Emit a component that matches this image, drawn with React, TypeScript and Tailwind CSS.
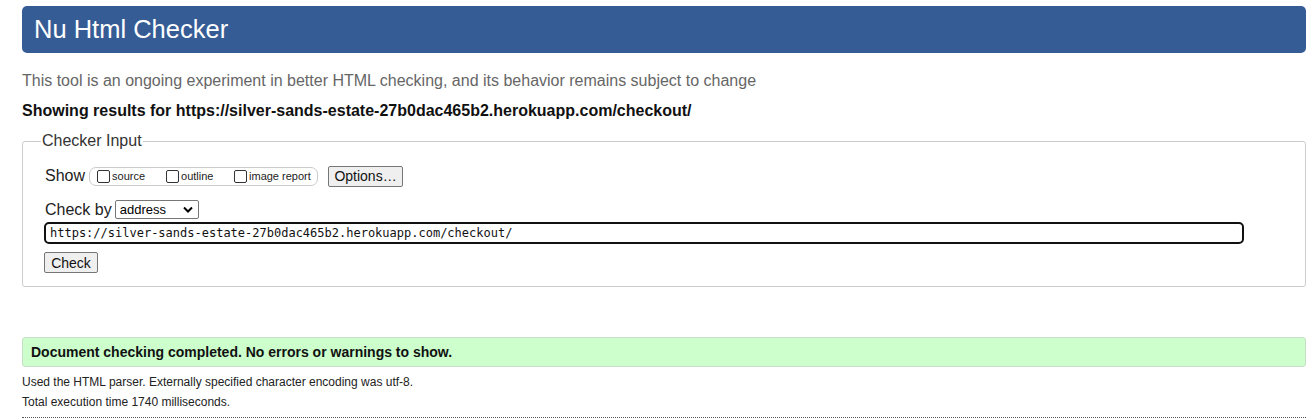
import React from "react";

const sans = { fontFamily: '"Liberation Sans", Arial, sans-serif' };

function CheckOption({ label, className }: { label: string; className?: string }) {
  return (
    <label className={`flex items-center ${className ?? ""}`}>
      <span className="mr-[2px] inline-block h-[13px] w-[13px] rounded-[2px] border border-[#333] bg-white" />
      <span className="text-[11px] text-[#222]">{label}</span>
    </label>
  );
}

export default function App() {
  const url = "https://silver-sands-estate-27b0dac465b2.herokuapp.com/checkout/";

  return (
    <div className="min-h-[420px] bg-white pl-[22px] pr-[10px] pt-[6px] text-black" style={sans}>
      <header className="flex h-[47px] items-center rounded-[5px] bg-[#365c95] pl-[12px]">
        <h1 className="text-[25.5px] leading-none text-white">Nu Html Checker</h1>
      </header>

      <p className="mt-[19px] text-[16px] leading-[18px] text-[#666]">
        This tool is an ongoing experiment in better HTML checking, and its behavior remains subject to change
      </p>
      <p className="mt-[12px] text-[16px] font-bold leading-[18px] text-[#111]">Showing results for {url}</p>

      <fieldset className="mt-[9px] rounded-[3px] border border-[#ccc] pb-[13px] pl-[21px] pr-[16px] pt-[11px]">
        <legend className="ml-[-3px] px-[1px] text-[16px] text-[#333]">Checker Input</legend>

        <div className="flex h-[24px] items-center">
          <span className="ml-[1px] mr-[4px] text-[16px] text-[#222]">Show</span>
          <div className="flex h-[19px] w-[229px] items-center rounded-[7px] border border-[#ccc] pl-[7px]">
            <CheckOption label="source" className="w-[69px]" />
            <CheckOption label="outline" className="w-[68px]" />
            <CheckOption label="image report" />
          </div>
          <button className="ml-[10px] h-[21px] w-[75px] rounded-[2px] border border-[#767676] bg-[#efefef] text-[14px] leading-none text-[#111]">
            Options…
          </button>
        </div>

        <div className="mt-[12px] flex h-[19px] items-center">
          <span className="ml-[1px] mr-[3px] text-[16px] leading-none text-[#222]">Check by</span>
          <div className="flex h-[19px] w-[84px] items-center justify-between rounded-[2px] border border-[#767676] bg-white pl-[4px] pr-[5px]">
            <span className="text-[13px] leading-none">address</span>
            <svg width="10" height="7" viewBox="0 0 10 7">
              <path d="M1 1.5 L5 5.5 L9 1.5" fill="none" stroke="#000" strokeWidth="2" />
            </svg>
          </div>
        </div>

        <div className="mt-[3px] flex h-[22px] w-[1200px] items-center rounded-[5px] border-2 border-[#111] pl-[4px]">
          <span className="text-[12px] leading-none text-[#111]" style={{ fontFamily: '"DejaVu Sans Mono", monospace' }}>
            {url}
          </span>
        </div>

        <button className="mt-[8px] block h-[21px] w-[54px] rounded-[2px] border border-[#767676] bg-[#efefef] text-[14px] leading-none text-[#111]">
          Check
        </button>
      </fieldset>

      <div className="mt-[50px] flex h-[30px] items-center rounded-[3px] border border-[#c6dfc6] bg-[#ccffcc] pl-[8px]">
        <span className="text-[14px] font-bold text-[#111]">Document checking completed. No errors or warnings to show.</span>
      </div>

      <p className="mt-[8px] text-[12px] leading-[14px] text-[#222]">
        Used the HTML parser. Externally specified character encoding was utf-8.
      </p>
      <p className="mt-[6px] text-[12px] leading-[14px] text-[#222]">Total execution time 1740 milliseconds.</p>
      <div className="mt-[8px] border-t border-dotted border-[#555]" />
    </div>
  );
}
